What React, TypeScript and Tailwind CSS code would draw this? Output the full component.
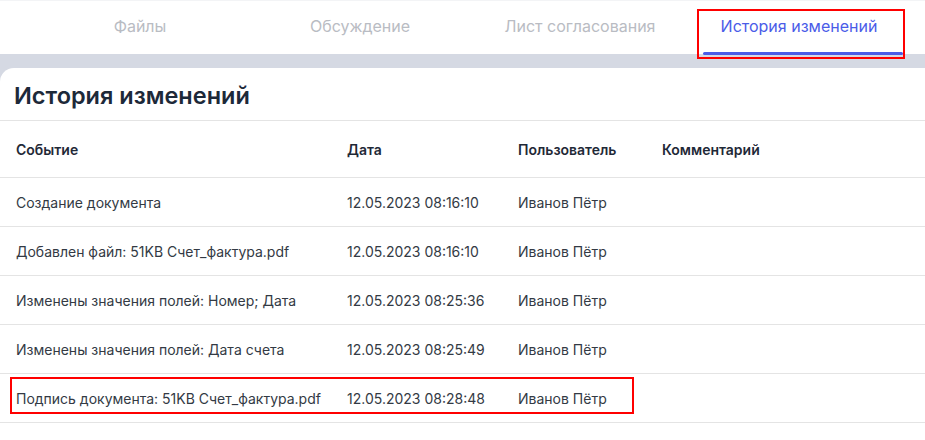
import React from 'react';

interface HistoryRow {
    event: string;
    date: string;
    user: string;
    comment: string;
}

const tabs = ['Файлы', 'Обсуждение', 'Лист согласования', 'История изменений'];

const rows: HistoryRow[] = [
    { event: 'Создание документа', date: '12.05.2023 08:16:10', user: 'Иванов Пётр', comment: '' },
    { event: 'Добавлен файл: 51KB Счет_фактура.pdf', date: '12.05.2023 08:16:10', user: 'Иванов Пётр', comment: '' },
    { event: 'Изменены значения полей: Номер; Дата', date: '12.05.2023 08:25:36', user: 'Иванов Пётр', comment: '' },
    { event: 'Изменены значения полей: Дата счета', date: '12.05.2023 08:25:49', user: 'Иванов Пётр', comment: '' },
    { event: 'Подпись документа: 51KB Счет_фактура.pdf', date: '12.05.2023 08:28:48', user: 'Иванов Пётр', comment: '' },
];

const tabOffsets = ['ml-[40px]', 'ml-[20px]', 'ml-[20px]', 'ml-[23px] pr-2'];

export default function App() {
    const active = 3;

    return (
        <div className="w-[925px] h-[440px] overflow-hidden bg-[#d5d9e3] font-['Inter','Noto_Sans',sans-serif]">
            {/* Tabs */}
            <div className="h-[54px] bg-white border-t border-[#f3f4f6] flex">
                {tabs.map((tab, idx) => (
                    <div
                        key={tab}
                        className={`${tabOffsets[idx]} w-[200px] relative flex justify-center pt-[13px] text-[16px] ${idx === active ? 'text-[#4a5ce8]' : 'text-[#b9bcc3]'}`}
                    >
                        {tab}
                        {idx === active && (
                            <>
                                <div className="absolute left-0 right-0 bottom-[-1px] h-[3px] rounded-full bg-[#4a5ce8]" />
                                <div className="absolute left-[-6px] right-[-2px] top-[8px] bottom-[-5px] border-2 border-[#ff0000]" />
                            </>
                        )}
                    </div>
                ))}
            </div>

            {/* Card */}
            <div className="mt-[14px] bg-white rounded-tl-[14px] h-[400px]">
                <h1 className="pl-[14px] pt-[14px] pb-[10px] text-[23.5px] leading-[28px] font-semibold text-[#1d2939]">История изменений</h1>
                <div className="border-t border-[#e4e4e4]">
                    <div className="flex h-[57px] items-center text-[14px] font-semibold text-[#1f2937] border-b border-[#e4e4e4]">
                        <div className="w-[347px] pl-4">Событие</div>
                        <div className="w-[171px]">Дата</div>
                        <div className="w-[144px]">Пользователь</div>
                        <div className="flex-1">Комментарий</div>
                    </div>
                    {rows.map((row, idx) => (
                        <div key={idx} className="flex h-[49px] items-center text-[14px] text-[#333a44] border-b border-[#e4e4e4]">
                            <div className="w-[347px] pl-4 relative">
                                {row.event}
                                {idx === rows.length - 1 && (
                                    <div className="absolute left-[10px] top-[-11px] w-[624px] h-[37px] border-2 border-[#ff0000]" />
                                )}
                            </div>
                            <div className="w-[171px]">{row.date}</div>
                            <div className="w-[144px]">{row.user}</div>
                            <div className="flex-1">{row.comment}</div>
                        </div>
                    ))}
                </div>
            </div>
        </div>
    );
}
